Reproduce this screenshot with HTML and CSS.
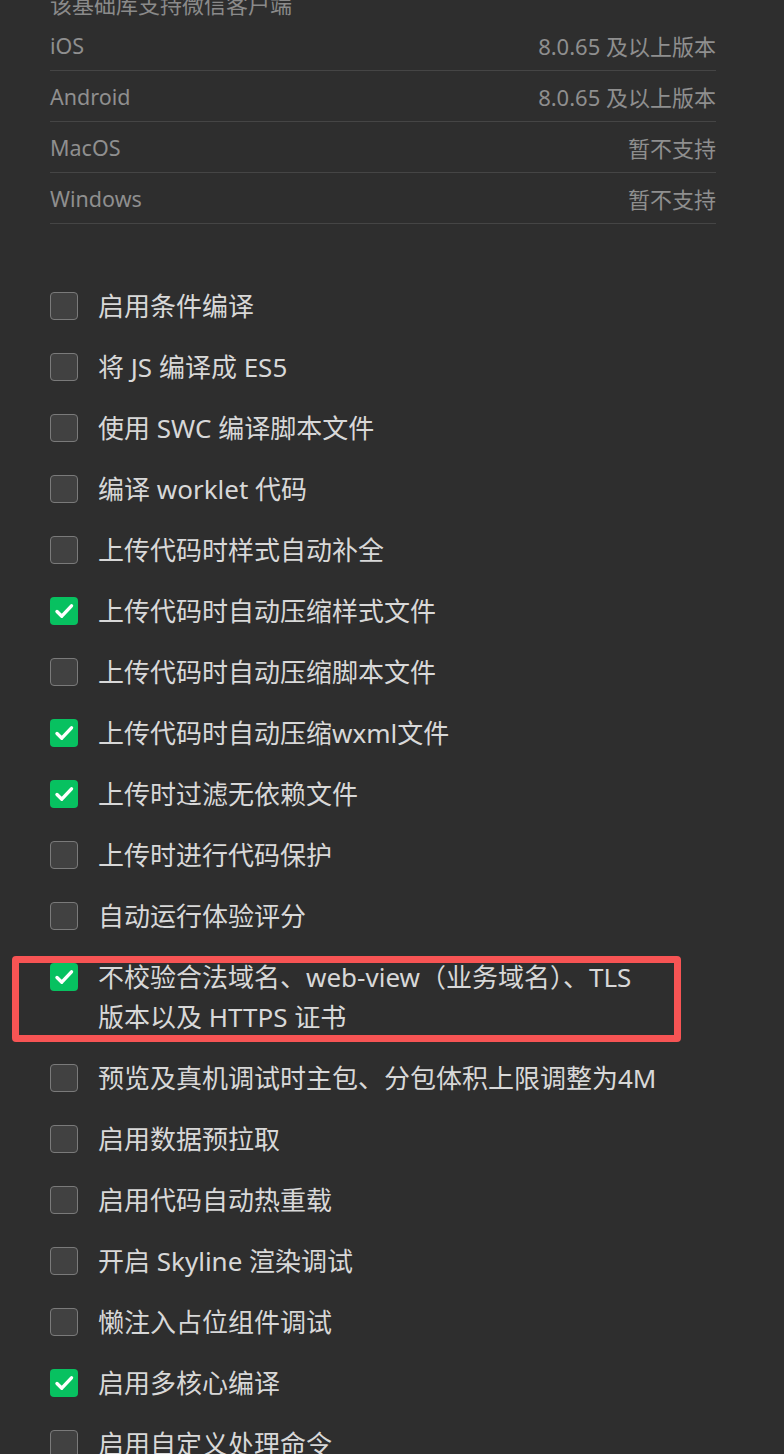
FILE: index.html
```html
<!DOCTYPE html>
<html lang="zh-CN">
<head>
<meta charset="utf-8">
<title>设置</title>
<link rel="stylesheet" href="styles.css">
</head>
<body>
<div class="page">
  <div class="support-title">该基础库支持微信客户端</div>
  <div class="info-list">
    <div class="info-row"><span class="info-name">iOS</span><span class="info-value">8.0.65 及以上版本</span></div>
    <div class="info-row"><span class="info-name">Android</span><span class="info-value">8.0.65 及以上版本</span></div>
    <div class="info-row"><span class="info-name">MacOS</span><span class="info-value">暂不支持</span></div>
    <div class="info-row"><span class="info-name">Windows</span><span class="info-value">暂不支持</span></div>
  </div>

  <div class="options">
    <div class="option"><span class="box"></span><span class="label">启用条件编译</span></div>
    <div class="option"><span class="box"></span><span class="label">将 JS 编译成 ES5</span></div>
    <div class="option"><span class="box"></span><span class="label">使用 SWC 编译脚本文件</span></div>
    <div class="option"><span class="box"></span><span class="label">编译 worklet 代码</span></div>
    <div class="option"><span class="box"></span><span class="label">上传代码时样式自动补全</span></div>
    <div class="option"><span class="box checked"><svg viewBox="0 0 28 28"><path d="M7 14.5 L11.8 19.2 L21.5 8.8"/></svg></span><span class="label">上传代码时自动压缩样式文件</span></div>
    <div class="option"><span class="box"></span><span class="label">上传代码时自动压缩脚本文件</span></div>
    <div class="option"><span class="box checked"><svg viewBox="0 0 28 28"><path d="M7 14.5 L11.8 19.2 L21.5 8.8"/></svg></span><span class="label">上传代码时自动压缩wxml文件</span></div>
    <div class="option"><span class="box checked"><svg viewBox="0 0 28 28"><path d="M7 14.5 L11.8 19.2 L21.5 8.8"/></svg></span><span class="label">上传时过滤无依赖文件</span></div>
    <div class="option"><span class="box"></span><span class="label">上传时进行代码保护</span></div>
    <div class="option"><span class="box"></span><span class="label">自动运行体验评分</span></div>
    <div class="option highlighted"><span class="box checked"><svg viewBox="0 0 28 28"><path d="M7 14.5 L11.8 19.2 L21.5 8.8"/></svg></span><span class="label">不校验合法域名、web-view（业务域名）、TLS<br>版本以及 HTTPS 证书</span><span class="mark"></span></div>
    <div class="option"><span class="box"></span><span class="label">预览及真机调试时主包、分包体积上限调整为4M</span></div>
    <div class="option"><span class="box"></span><span class="label">启用数据预拉取</span></div>
    <div class="option"><span class="box"></span><span class="label">启用代码自动热重载</span></div>
    <div class="option"><span class="box"></span><span class="label">开启 Skyline 渲染调试</span></div>
    <div class="option"><span class="box"></span><span class="label">懒注入占位组件调试</span></div>
    <div class="option"><span class="box checked"><svg viewBox="0 0 28 28"><path d="M7 14.5 L11.8 19.2 L21.5 8.8"/></svg></span><span class="label">启用多核心编译</span></div>
    <div class="option"><span class="box"></span><span class="label">启用自定义处理命令</span></div>
  </div>
</div>
</body>
</html>
```
FILE: styles.css
```css
html, body {
  margin: 0;
  padding: 0;
  background: #2e2e2e;
  height: 1454px;
  overflow: hidden;
}

.page {
  width: 666px;
  margin-left: 50px;
  font-family: "Noto Sans", "Open Sans", "Noto Sans CJK SC", sans-serif;
}

.support-title {
  margin-top: -13px;
  line-height: 32px;
  font-size: 22px;
  color: #8a8a8a;
  font-family: "Noto Sans CJK SC", sans-serif;
}

.info-list {
  margin-top: 1px;
}

.info-row {
  display: flex;
  justify-content: space-between;
  align-items: center;
  height: 50px;
  border-bottom: 1px solid #454545;
  font-size: 21.5px;
  color: #8f8f8f;
  font-family: "Noto Sans", "Noto Sans CJK SC", sans-serif;
}

.info-value {
  font-size: 22px;
  font-family: "Noto Sans", "Noto Sans CJK SC", sans-serif;
}

.options {
  margin-top: 51.5px;
}

.option {
  position: relative;
  display: flex;
  align-items: flex-start;
  gap: 20px;
  padding: 10.5px 0;
  font-size: 26px;
  line-height: 40px;
  color: #d8d8d8;
}

.label {
  flex: 1;
  font-family: "Noto Sans", "Noto Sans CJK SC", sans-serif;
}

.box {
  flex: none;
  box-sizing: border-box;
  width: 28px;
  height: 28px;
  margin-top: 6px;
  border: 1.5px solid #7a7a7a;
  border-radius: 4px;
  background: #414141;
  display: flex;
  align-items: center;
  justify-content: center;
}

.box.checked {
  border: none;
  background: #07c160;
}

.box svg {
  width: 28px;
  height: 28px;
}

.box svg path {
  fill: none;
  stroke: #ffffff;
  stroke-width: 3.4;
  stroke-linecap: round;
  stroke-linejoin: round;
}

.mark {
  position: absolute;
  left: -38px;
  right: 35px;
  top: 9.5px;
  bottom: 5.5px;
  border: 7px solid #f75454;
  border-radius: 4px;
  pointer-events: none;
}
```
